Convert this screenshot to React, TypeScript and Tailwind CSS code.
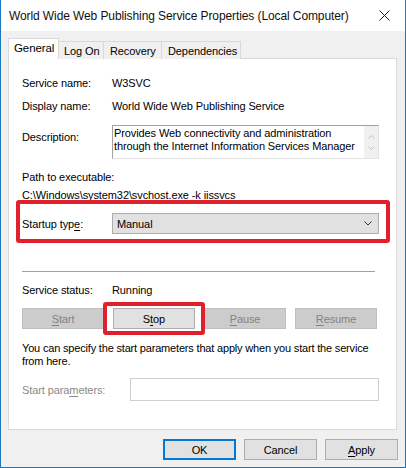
import React from "react";

const font = { fontFamily: '"Liberation Sans", Arial, sans-serif' };

function U({ children }: { children: React.ReactNode }) {
  return <span className="underline underline-offset-[1.5px]">{children}</span>;
}

function Btn({
  children,
  disabled,
  className = "",
}: {
  children: React.ReactNode;
  disabled?: boolean;
  className?: string;
}) {
  return (
    <div
      className={
        "h-[21px] flex items-center justify-center border shrink-0 " +
        (disabled
          ? "bg-[#cccccc] border-[#bfbfbf] text-[#838383] "
          : "bg-[#e1e1e1] border-[#adadad] text-black ") +
        className
      }
    >
      {children}
    </div>
  );
}

export default function App() {
  return (
    <div
      style={font}
      className="w-[406px] h-[468px] bg-[#f0f0f0] border-x border-b border-[#1b76bd] flex flex-col text-[11px] tracking-[-0.1px] text-black leading-[16px] overflow-hidden"
    >
      {/* Title bar */}
      <div className="h-[31px] bg-white flex items-center pl-[8px] pr-[10px] shrink-0">
        <div className="text-[12px] leading-[18px] flex-1 whitespace-nowrap text-[#111]">
          World Wide Web Publishing Service Properties (Local Computer)
        </div>
        <svg width="11" height="11" viewBox="0 0 11 11" className="mr-[5px]">
          <path d="M0.5 0.5 L10.5 10.5 M10.5 0.5 L0.5 10.5" stroke="#222" strokeWidth="1" />
        </svg>
      </div>

      {/* Tabs */}
      <div className="pl-[7px] pr-[8px] pt-[7px] shrink-0">
        <div className="flex items-end h-[21px] relative z-10 whitespace-nowrap">
          <div className="h-[21px] w-[51px] bg-white border border-b-0 border-[#d9d9d9] pl-[5px] leading-[19px] text-[11.5px]">
            General
          </div>
          <div className="h-[18px] w-[45px] bg-[#f0f0f0] border border-l-0 border-b-0 border-[#d9d9d9] pl-[5px] leading-[18px]">
            Log On
          </div>
          <div className="h-[18px] w-[58px] bg-[#f0f0f0] border border-l-0 border-b-0 border-[#d9d9d9] pl-[6px] leading-[18px]">
            Recovery
          </div>
          <div className="h-[18px] w-[79px] bg-[#f0f0f0] border border-l-0 border-b-0 border-[#d9d9d9] pl-[6px] leading-[18px]">
            Dependencies
          </div>
        </div>
      </div>

      {/* Panel */}
      <div className="mx-[7px] -mt-px mr-[8px] h-[372px] bg-white border border-[#d9d9d9] relative pl-[13px] pr-[17px] flex flex-col whitespace-nowrap">
        {/* red highlight boxes */}
        <div className="absolute left-[7px] top-[141px] w-[374px] h-[43px] border-[4px] border-[#e1202d] rounded-[3px]" />
        <div className="absolute left-[94px] top-[243px] w-[102px] h-[33px] border-[4px] border-[#e1202d] rounded-[3px]" />

        <div className="flex mt-[16px] h-[16px]">
          <div className="w-[90px] shrink-0">Service name:</div>
          <div>W3SVC</div>
        </div>
        <div className="flex mt-[7px] h-[16px]">
          <div className="w-[90px] shrink-0">Display name:</div>
          <div>World Wide Web Publishing Service</div>
        </div>
        <div className="flex mt-[11px] h-[34px]">
          <div className="w-[90px] shrink-0 pt-[4px]">Description:</div>
          <div className="flex-1 min-w-0 flex border border-[#a0a0a0] border-r-[#e3e3e3] border-b-[#e3e3e3] bg-white">
            <div className="flex-1 min-w-0 pl-[1px] leading-[13px] pt-[1px] overflow-hidden">
              Provides Web connectivity and administration
              <br />
              through the Internet Information Services Manager
            </div>
            <div className="w-[14px] shrink-0 bg-[#f0f0f0] flex flex-col items-center justify-center gap-[7px]">
              <svg width="7" height="4" viewBox="0 0 7 4">
                <path d="M0.5 3.5 L3.5 0.5 L6.5 3.5" fill="none" stroke="#c2c2c2" strokeWidth="1" />
              </svg>
              <svg width="7" height="4" viewBox="0 0 7 4">
                <path d="M0.5 0.5 L3.5 3.5 L6.5 0.5" fill="none" stroke="#c2c2c2" strokeWidth="1" />
              </svg>
            </div>
          </div>
        </div>
        <div className="mt-[10px] h-[16px]">Path to executable:</div>
        <div className="mt-[2px] h-[16px]">C:\Windows\system32\svchost.exe -k iissvcs</div>

        <div className="flex items-center mt-[10px] h-[21px]">
          <div className="w-[90px] shrink-0">
            Startup typ<U>e</U>:
          </div>
          <div className="flex-1 h-[21px] bg-[#e1e1e1] border border-[#adadad] flex items-center pl-[4px] pr-[6px]">
            <div className="flex-1">Manual</div>
            <svg width="8" height="5" viewBox="0 0 8 5">
              <path d="M0.5 0.5 L4 4 L7.5 0.5" fill="none" stroke="#333" strokeWidth="1" />
            </svg>
          </div>
        </div>

        <div className="mt-[37px] h-px bg-[#a0a0a0] mr-[4px]" />

        <div className="flex mt-[10px] h-[16px]">
          <div className="w-[90px] shrink-0">Service status:</div>
          <div>Running</div>
        </div>

        <div className="flex gap-[9px] mt-[10px]">
          <Btn disabled className="w-[82px]">
            <U>S</U>tart
          </Btn>
          <Btn className="w-[82px]">
            S<U>t</U>op
          </Btn>
          <Btn disabled className="w-[82px]">
            <U>P</U>ause
          </Btn>
          <Btn disabled className="w-[82px]">
            <U>R</U>esume
          </Btn>
        </div>

        <div className="mt-[13px] leading-[13px] tracking-[-0.18px]">
          You can specify the start parameters that apply when you start the service
          <br />
          from here.
        </div>

        <div className="flex items-center mt-[10px] h-[23px]">
          <div className="w-[108px] shrink-0 text-[#8a8a8a]">
            Start para<U>m</U>eters:
          </div>
          <div className="flex-1 h-[23px] bg-white border border-[#cfcfcf]" />
        </div>
      </div>

      {/* Bottom buttons */}
      <div className="flex justify-end gap-[8px] pr-[7px] mt-[9px]">
        <div className="w-[73px] h-[21px] flex items-center justify-center bg-[#e1e1e1] border-2 border-[#0078d7]">
          OK
        </div>
        <Btn className="w-[73px]">Cancel</Btn>
        <Btn className="w-[73px]">
          <U>A</U>pply
        </Btn>
      </div>
    </div>
  );
}
